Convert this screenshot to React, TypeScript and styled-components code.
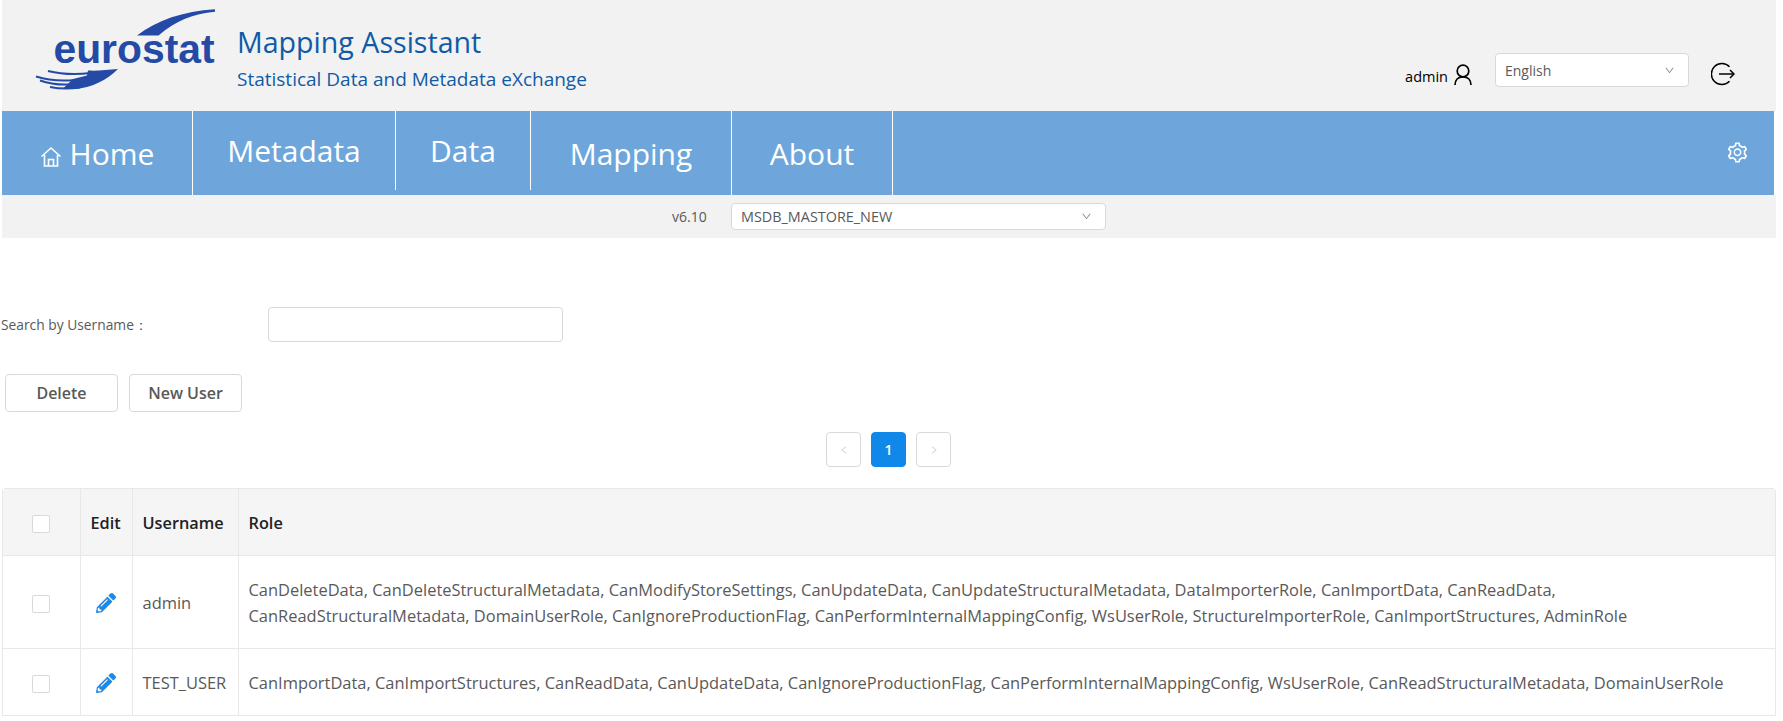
import React from 'react'
import styled, { createGlobalStyle } from 'styled-components'
import { AiOutlineDown, AiOutlineLeft, AiOutlineRight, AiOutlineSetting } from 'react-icons/ai'
import { FaPencilAlt } from 'react-icons/fa'

const GlobalStyle = createGlobalStyle`
  html, body {
    margin: 0;
    padding: 0;
    background: #fff;
    font-family: "Open Sans", "Liberation Sans", sans-serif;
    color: #595959;
  }
`

const rows = [
  {
    name: 'admin',
    role: [
      'CanDeleteData, CanDeleteStructuralMetadata, CanModifyStoreSettings, CanUpdateData, CanUpdateStructuralMetadata, DataImporterRole, CanImportData, CanReadData,',
      'CanReadStructuralMetadata, DomainUserRole, CanIgnoreProductionFlag, CanPerformInternalMappingConfig, WsUserRole, StructureImporterRole, CanImportStructures, AdminRole',
    ],
  },
  {
    name: 'TEST_USER',
    role: ['CanImportData, CanImportStructures, CanReadData, CanUpdateData, CanIgnoreProductionFlag, CanPerformInternalMappingConfig, WsUserRole, CanReadStructuralMetadata, DomainUserRole'],
  },
]

const navItems = [
  { label: 'Home', width: 191, raised: false, home: true },
  { label: 'Metadata', width: 203, raised: true },
  { label: 'Data', width: 135, raised: true },
  { label: 'Mapping', width: 201, raised: false },
  { label: 'About', width: 161, raised: false },
]

function Logo() {
  return (
    <LogoSvg viewBox="0 0 180 81" width="180" height="81">
      <path d="M102 26.500C122 11 148 2.500 180 0.300L180 2.800C158 4.500 141 12 123.500 26.500Z" fill="#254aa5" />
      <text x="18.500" y="54" textLength="161" lengthAdjust="spacingAndGlyphs" fontFamily="Liberation Sans" fontWeight="700" fontSize="40" fill="#254aa5">eurostat</text>
      <g fill="#254aa5">
        <path d="M83 60C72 71 56 79 40 80L28 79.500L38 70L52 66.500L53 61.500C62 62 72 61 83 60Z" />
      </g>
      <g fill="none" stroke="#254aa5" strokeWidth="2">
        <path d="M13 62C25 65 40 66 56 64" />
        <path d="M1 67.500C12 71 25 72.500 40 71" />
        <path d="M5 71.500C15 75 27 76.500 40 75" />
        <path d="M15 78C25 80 35 80 45 78.500" />
      </g>
    </LogoSvg>
  )
}

function HomeIcon() {
  return (
    <HomeSvg viewBox="0 0 22 22" width="22" height="22" fill="none" stroke="#fff" strokeWidth="1.600">
      <path d="M1.500 10.500L11 2L20.500 10.500" />
      <path d="M4.500 9V20H17.500V9" />
      <path d="M8.500 20V13.500H13.500V20" />
    </HomeSvg>
  )
}

function UserIcon() {
  return (
    <UserSvg viewBox="0 0 18 21" width="18" height="21" fill="none" stroke="#000" strokeWidth="1.700">
      <circle cx="9" cy="7" r="5.800" />
      <path d="M1 21C1 16 4 12.800 9 12.800C14 12.800 17 16 17 21" />
    </UserSvg>
  )
}

function LogoutIcon() {
  return (
    <svg viewBox="0 0 24 24" width="24" height="24" fill="none" stroke="#000" strokeWidth="1.500">
      <path d="M18.500 4.800A10.500 10.500 0 1 0 18.500 19.200" />
      <path d="M8 12H23" />
      <path d="M19 8L23 12L19 16" />
    </svg>
  )
}

export default function App() {
  return (
    <Page>
      <GlobalStyle />
      <Header>
        <Logo />
        <Titles>
          <AppTitle>Mapping Assistant</AppTitle>
          <AppSubtitle>Statistical Data and Metadata eXchange</AppSubtitle>
        </Titles>
        <UserArea>
          <UserName>admin</UserName>
          <UserIcon />
          <LanguageSelect>
            English
            <AiOutlineDown size={11} color="#8c8c8c" />
          </LanguageSelect>
          <LogoutBox><LogoutIcon /></LogoutBox>
        </UserArea>
      </Header>

      <Nav>
        {navItems.map((item) => (
          <NavItem key={item.label} $width={item.width} $raised={item.raised}>
            <NavLabel $raised={item.raised}>
              {item.home && <HomeIcon />}
              {item.label}
            </NavLabel>
          </NavItem>
        ))}
        <GearBox><AiOutlineSetting size={23} color="#fff" /></GearBox>
      </Nav>

      <SubBar>
        <Version>v6.10</Version>
        <StoreSelect>
          MSDB_MASTORE_NEW
          <AiOutlineDown size={11} color="#8c8c8c" />
        </StoreSelect>
      </SubBar>

      <SearchRow>
        <SearchLabel>Search by Username：</SearchLabel>
        <SearchInput />
      </SearchRow>

      <Actions>
        <ActionButton>Delete</ActionButton>
        <ActionButton>New User</ActionButton>
      </Actions>

      <Pager>
        <PageButton><AiOutlineLeft size={10} color="#cfcfcf" /></PageButton>
        <PageButton $active>1</PageButton>
        <PageButton><AiOutlineRight size={10} color="#cfcfcf" /></PageButton>
      </Pager>

      <TableWrap>
        <Table>
          <colgroup>
            <col style={{ width: 77 }} />
            <col style={{ width: 52 }} />
            <col style={{ width: 106 }} />
            <col />
          </colgroup>
          <thead>
            <tr>
              <HeadCell><Check /></HeadCell>
              <HeadCell>Edit</HeadCell>
              <HeadCell>Username</HeadCell>
              <HeadCell>Role</HeadCell>
            </tr>
          </thead>
          <tbody>
            {rows.map((row) => (
              <tr key={row.name}>
                <BodyCell><Check /></BodyCell>
                <BodyCell><FaPencilAlt size={20} color="#1c8ae8" /></BodyCell>
                <BodyCell>{row.name}</BodyCell>
                <BodyCell>
                  {row.role.map((line) => <RoleLine key={line}>{line}</RoleLine>)}
                </BodyCell>
              </tr>
            ))}
          </tbody>
        </Table>
      </TableWrap>
    </Page>
  )
}

const Page = styled.div`
  width: 1774px;
  padding-left: 2px;
`

const Header = styled.header`
  height: 111px;
  background: #f2f2f2;
  display: flex;
  align-items: flex-start;
`

const LogoSvg = styled.svg`
  margin: 9px 0 0 33px;
  flex: none;
`

const Titles = styled.div`
  margin: 23px 0 0 22px;
  color: #0f5ba7;
`

const AppTitle = styled.div`
  font-size: 28.600px;
  line-height: 38px;
`

const AppSubtitle = styled.div`
  font-size: 19px;
  line-height: 26px;
  margin-top: 5px;
`

const UserArea = styled.div`
  margin: 53px 0 0 auto;
  display: flex;
  align-items: flex-start;
`

const UserName = styled.span`
  font-size: 14.500px;
  line-height: 20px;
  color: #000;
  margin: 14px 6px 0 0;
`

const UserSvg = styled.svg`
  margin-top: 11px;
`

const SelectBox = styled.div`
  box-sizing: border-box;
  background: #fff;
  border: 1px solid #d9d9d9;
  border-radius: 4px;
  display: flex;
  align-items: center;
  justify-content: space-between;
  color: #595959;
`

const LanguageSelect = styled(SelectBox)`
  width: 194px;
  height: 34px;
  margin-left: 23px;
  padding: 0 13px 0 9px;
  font-size: 14px;
`

const LogoutBox = styled.div`
  margin: 9px 41px 0 22px;
  height: 24px;
`

const Nav = styled.nav`
  width: 1772px;
  height: 84px;
  background: #6ea6dc;
  display: flex;
`

const NavItem = styled.div<{ $width: number; $raised?: boolean }>`
  width: ${(p) => p.$width}px;
  height: ${(p) => (p.$raised ? 79 : 84)}px;
  box-sizing: border-box;
  border-right: 1px solid #fff;
  display: flex;
  justify-content: center;
  align-items: flex-start;
`

const NavLabel = styled.span<{ $raised?: boolean }>`
  margin-top: ${(p) => (p.$raised ? 19 : 22)}px;
  font-size: 30px;
  line-height: 41px;
  color: #fff;
  display: flex;
  align-items: center;
  gap: 8px;
`

const HomeSvg = styled.svg`
  margin-top: 7px;
`

const GearBox = styled.div`
  margin: 30px 25px 0 auto;
  height: 23px;
`

const SubBar = styled.div`
  height: 43px;
  background: #f2f2f2;
  padding-top: 8px;
  box-sizing: border-box;
  display: flex;
  align-items: flex-start;
`

const Version = styled.span`
  margin-left: 670px;
  width: 59px;
  font-size: 14px;
  line-height: 27px;
  color: #595959;
`

const StoreSelect = styled(SelectBox)`
  width: 375px;
  height: 27px;
  padding: 0 13px 0 9px;
  font-size: 14.400px;
`

const SearchRow = styled.div`
  margin-top: 69px;
  display: flex;
  align-items: center;
`

const SearchLabel = styled.label`
  width: 267px;
  margin-left: -1px;
  font-size: 13.800px;
  color: #595959;
`

const SearchInput = styled.div`
  width: 295px;
  height: 35px;
  box-sizing: border-box;
  background: #fff;
  border: 1px solid #d9d9d9;
  border-radius: 4px;
`

const Actions = styled.div`
  margin: 32px 0 0 3px;
  display: flex;
  gap: 11px;
`

const ActionButton = styled.button`
  width: 113px;
  height: 38px;
  background: #fff;
  border: 1px solid #d9d9d9;
  border-radius: 4px;
  font-family: inherit;
  font-size: 16px;
  font-weight: 600;
  color: #595959;
  padding: 0;
`

const Pager = styled.div`
  margin: 20px 0 0 824px;
  display: flex;
  gap: 10px;
`

const PageButton = styled.div<{ $active?: boolean }>`
  width: 35px;
  height: 35px;
  box-sizing: border-box;
  border: 1px solid ${(p) => (p.$active ? '#1088e9' : '#d9d9d9')};
  border-radius: 4px;
  background: ${(p) => (p.$active ? '#1088e9' : '#fff')};
  color: #fff;
  font-size: 14px;
  font-weight: 600;
  display: flex;
  align-items: center;
  justify-content: center;
`

const TableWrap = styled.div`
  margin-top: 21px;
  width: 1774px;
  border: 1px solid #e8e8e8;
  border-bottom: 0;
  border-radius: 4px 4px 0 0;
  box-sizing: border-box;
`

const Table = styled.table`
  width: 100%;
  border-collapse: collapse;
  table-layout: fixed;
`

const HeadCell = styled.th`
  height: 66px;
  padding: 2px 10px 0;
  background: #f5f5f5;
  border-bottom: 1px solid #e8e8e8;
  border-right: 1px solid #e8e8e8;
  text-align: left;
  font-size: 16.300px;
  font-weight: 600;
  color: #222;
  box-sizing: border-box;
  &:last-child { border-right: 0; }
`

const BodyCell = styled.td`
  padding: 2px 10px 0;
  height: 67px;
  border-bottom: 1px solid #e8e8e8;
  border-right: 1px solid #e8e8e8;
  text-align: left;
  font-size: 16.450px;
  color: #595959;
  white-space: nowrap;
  box-sizing: border-box;
  tr:first-child & { height: 93px; }
  &:last-child { border-right: 0; }
  svg { display: block; margin: 0 auto; }
`

const RoleLine = styled.div`
  line-height: 26px;
`

const Check = styled.span`
  display: block;
  width: 18px;
  height: 18px;
  margin: 2px auto 0;
  box-sizing: border-box;
  background: #fff;
  border: 1px solid #d9d9d9;
  border-radius: 2px;
`
